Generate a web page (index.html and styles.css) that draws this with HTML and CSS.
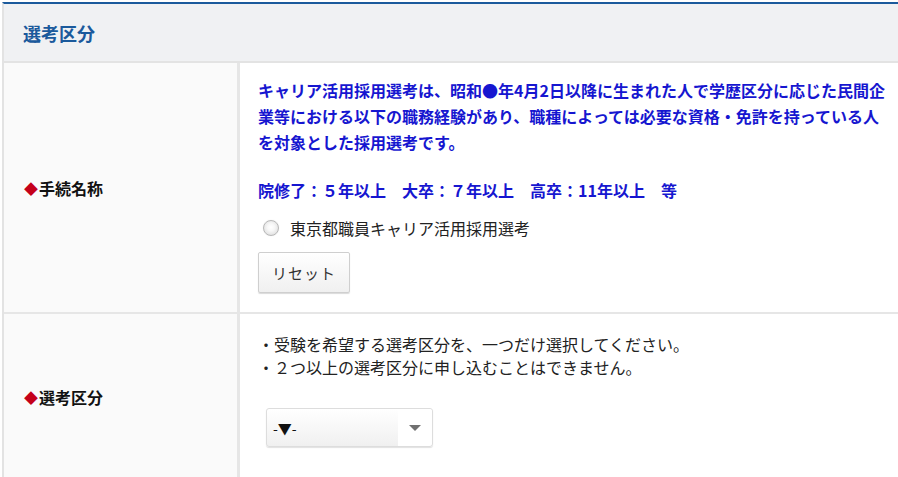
FILE: index.html
```html
<!DOCTYPE html>
<html lang="ja">
<head>
<meta charset="utf-8">
<title>選考区分</title>
<link rel="stylesheet" href="styles.css">
</head>
<body>
<section class="panel">
  <h2 class="panel-title">選考区分</h2>
  <div class="row row-first">
    <div class="label-cell"><span class="mark">◆</span>手続名称</div>
    <div class="value-cell">
      <p class="notice">キャリア活用採用選考は、昭和●年4月2日以降に生まれた人で学歴区分に応じた民間企業等における以下の職務経験があり、職種によっては必要な資格・免許を持っている人を対象とした採用選考です。</p>
      <p class="notice notice-years">院修了：５年以上　大卒：７年以上　高卒：11年以上　等</p>
      <label class="radio-line"><input type="radio" name="proc" class="radio-input"><span class="radio-box"></span><span>東京都職員キャリア活用採用選考</span></label>
      <button type="button" class="btn">リセット</button>
    </div>
  </div>
  <div class="row">
    <div class="label-cell"><span class="mark">◆</span>選考区分</div>
    <div class="value-cell value-cell-2">
      <p class="help">・受験を希望する選考区分を、一つだけ選択してください。<br>・２つ以上の選考区分に申し込むことはできません。</p>
      <div class="select">
        <span class="select-text">-▼-</span>
        <span class="select-arrow"></span>
      </div>
    </div>
  </div>
</section>
</body>
</html>
```
FILE: styles.css
```css
html, body {
  margin: 0;
  padding: 0;
  background: #ffffff;
}
body {
  font-family: "Noto Sans CJK JP", "Noto Sans", sans-serif;
  color: #333333;
  overflow: hidden;
}
.panel {
  margin: 2px 0 0 2px;
  border-top: 2px solid #1b5a9c;
  border-left: 2px solid #e3e3e3;
}
.panel-title {
  margin: 0;
  height: 57px;
  display: flex;
  align-items: center;
  padding-left: 19px;
  background: #f0f1f3;
  border-bottom: 2px solid #e3e3e3;
  color: #1b5a9c;
  font-size: 18px;
  font-weight: bold;
  line-height: 1;
}
.row {
  display: flex;
  border-bottom: 2px solid #e6e6e6;
}
.label-cell {
  width: 236px;
  flex: none;
  background: #fafafa;
  border-right: 3px solid #e6e6e6;
  display: flex;
  align-items: center;
  padding-left: 20px;
  box-sizing: border-box;
  font-size: 16px;
  font-weight: bold;
  color: #111111;
}
.mark {
  color: #c4001a;
  font-size: 14px;
  margin-right: 1px;
}
.value-cell {
  flex: 1;
  padding: 14px 4px 19px 18px;
}
.notice {
  margin: 0;
  color: #1616d0;
  font-weight: bold;
  font-size: 16px;
  line-height: 26px;
}
.notice-years {
  margin-top: 22px;
}
.radio-line {
  display: flex;
  align-items: center;
  margin-top: 13px;
  height: 24px;
  font-size: 16px;
  color: #222222;
}
.radio-input {
  display: none;
}
.radio-box {
  flex: none;
  width: 16px;
  height: 16px;
  box-sizing: border-box;
  margin: 0 11px 0 5px;
  border-radius: 50%;
  border: 1px solid #b8b8b8;
  background: radial-gradient(circle at 50% 45%, #ffffff 0%, #f7f7f7 35%, #e0e0e0 80%, #cfcfcf 100%);
  box-shadow: 0 0 1px rgba(0,0,0,0.15);
}
.btn {
  display: block;
  margin-top: 12px;
  width: 92px;
  height: 41px;
  border: 1px solid #cfcfcf;
  border-radius: 2px;
  background: linear-gradient(#ffffff, #f0f0f0);
  box-shadow: 0 1px 1px rgba(0,0,0,0.15);
  font-family: "Noto Sans CJK JP", "Noto Sans", sans-serif;
  font-size: 15px;
  color: #333333;
  letter-spacing: 1px;
  padding: 0;
}
.value-cell-2 {
  padding-top: 19px;
  padding-bottom: 33px;
}
.help {
  margin: 0;
  font-size: 16px;
  line-height: 23px;
  color: #222222;
}
.select {
  margin: 29px 0 0 8px;
  width: 167px;
  height: 39px;
  box-sizing: border-box;
  border: 1px solid #dddddd;
  border-radius: 3px;
  box-shadow: 0 1px 1px rgba(0,0,0,0.12);
  display: flex;
  align-items: stretch;
  background: linear-gradient(#ffffff, #f0f0f0);
}
.select-text {
  flex: 1;
  display: flex;
  align-items: center;
  padding-left: 6px;
  font-size: 14px;
  color: #111111;
}
.select-arrow {
  width: 34px;
  background: #ffffff;
  border-radius: 0 3px 3px 0;
  display: flex;
  align-items: center;
  justify-content: center;
}
.select-arrow::before {
  content: "";
  width: 0;
  height: 0;
  border-left: 6px solid transparent;
  border-right: 6px solid transparent;
  border-top: 6px solid #707070;
}
```
